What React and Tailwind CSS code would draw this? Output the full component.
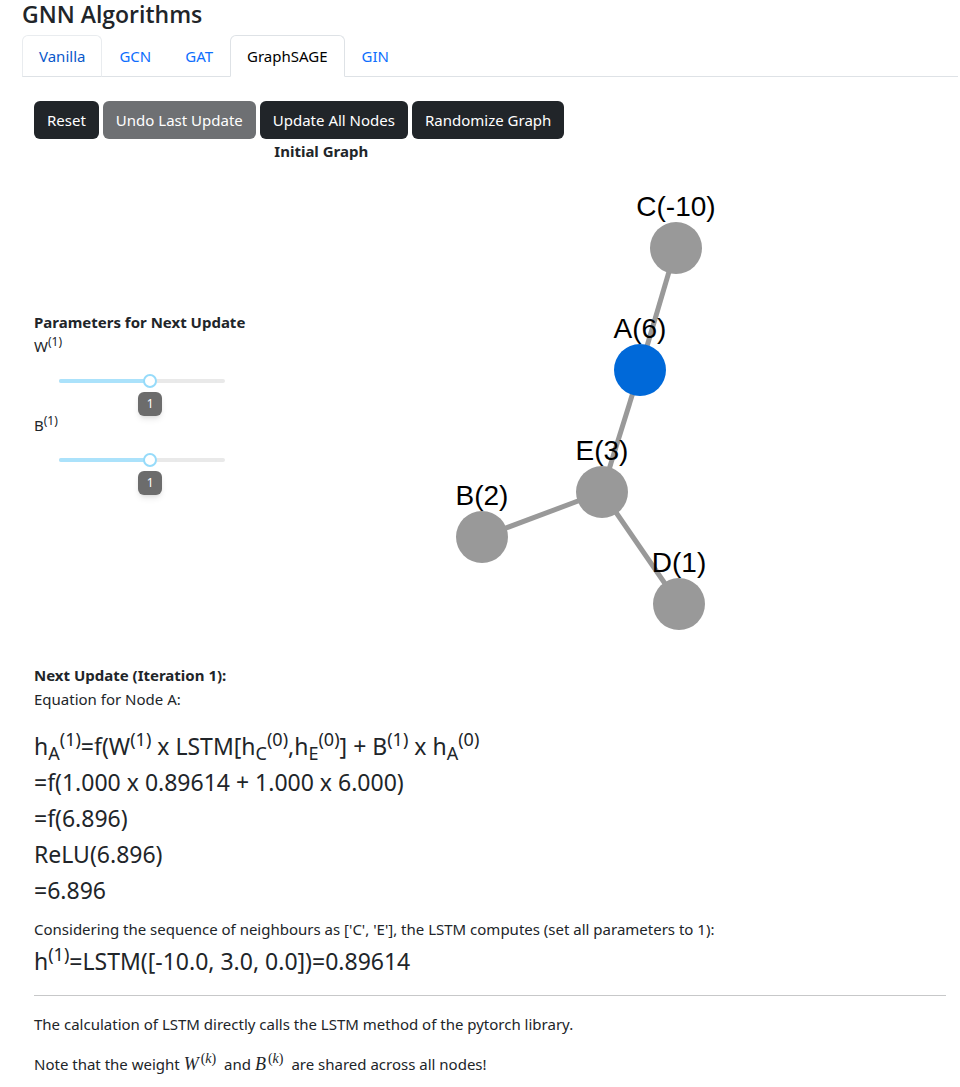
import { useState } from "react";
import clsx from "clsx";

const TABS = ["Vanilla", "GCN", "GAT", "GraphSAGE", "GIN"];

const NODES = [
  { id: "A", value: 6, x: 390, y: 207, active: true },
  { id: "B", value: 2, x: 232, y: 374 },
  { id: "C", value: -10, x: 426, y: 85 },
  { id: "D", value: 1, x: 429, y: 441 },
  { id: "E", value: 3, x: 352, y: 329 },
];

const EDGES = [
  ["C", "A"],
  ["A", "E"],
  ["B", "E"],
  ["E", "D"],
];

const nodeById = (id) => NODES.find((n) => n.id === id);

function Tab({ name, selected, highlighted, onClick }) {
  return (
    <button
      type="button"
      role="tab"
      aria-selected={selected}
      onClick={onClick}
      className={clsx(
        "-mb-px h-[42px] cursor-pointer rounded-t-md border px-4",
        selected && "border-[#dee2e6] border-b-white bg-white text-black",
        !selected && highlighted && "border-[#e9ecef] border-b-[#dee2e6] text-[#0a58ca]",
        !selected && !highlighted && "border-transparent text-[#0d6efd]"
      )}
    >
      {name}
    </button>
  );
}

function ActionButton({ children, disabled }) {
  return (
    <button
      type="button"
      disabled={disabled}
      className="h-[38px] rounded-md bg-[#212529] px-[13px] text-white disabled:opacity-65"
    >
      {children}
    </button>
  );
}

function ParameterSlider({ id, symbol }) {
  const [value, setValue] = useState(1);
  const percent = ((value + 10) / 20) * 100;
  return (
    <div className="h-[79px]">
      <label htmlFor={id} className="block h-6">
        {symbol}
        <sup className="text-xs leading-none">(1)</sup>
      </label>
      <div className="relative mx-[25px] mt-4 h-[14px]">
        <div className="absolute inset-x-0 top-[5px] h-1 rounded-sm bg-[#e9e9e9]">
          <div className="h-1 rounded-sm bg-[#abe2fb]" style={{ width: `${percent}%` }} />
        </div>
        <input
          id={id}
          type="range"
          min="-10"
          max="10"
          value={value}
          onChange={(e) => setValue(Number(e.target.value))}
          className="absolute inset-y-0 -left-[7px] m-0 h-[14px] w-[calc(100%+14px)] appearance-none bg-transparent [&::-webkit-slider-thumb]:h-[14px] [&::-webkit-slider-thumb]:w-[14px] [&::-webkit-slider-thumb]:appearance-none [&::-webkit-slider-thumb]:rounded-full [&::-webkit-slider-thumb]:border-2 [&::-webkit-slider-thumb]:border-solid [&::-webkit-slider-thumb]:border-[#96dbfa] [&::-webkit-slider-thumb]:bg-white"
        />
        <output
          htmlFor={id}
          className="absolute top-[18px] flex h-6 min-w-6 -translate-x-1/2 items-center justify-center rounded-md bg-[#6c6c6c] px-1 text-xs text-white shadow-md shadow-black/10"
          style={{ left: `${percent}%` }}
        >
          {value}
        </output>
      </div>
    </div>
  );
}

function Graph() {
  return (
    <svg viewBox="0 0 696 500" className="h-[500px] min-w-0 flex-1" role="img" aria-label="Initial Graph">
      {EDGES.map(([from, to]) => (
        <line
          key={from + to}
          x1={nodeById(from).x}
          y1={nodeById(from).y}
          x2={nodeById(to).x}
          y2={nodeById(to).y}
          stroke="#999999"
          strokeWidth="5"
        />
      ))}
      {NODES.map((n) => (
        <g key={n.id}>
          <circle cx={n.x} cy={n.y} r="26" fill={n.active ? "#0069d9" : "#999999"} />
          <text
            x={n.x}
            y={n.y - 32}
            textAnchor="middle"
            fill="#000000"
            className="font-['Liberation_Sans',Arial,sans-serif] text-[28px]"
          >
            {`${n.id}(${n.value})`}
          </text>
        </g>
      ))}
    </svg>
  );
}

function Sup({ children }) {
  return <sup className="text-lg leading-none">{children}</sup>;
}

function Sub({ children }) {
  return <sub className="text-lg leading-none">{children}</sub>;
}

function MathSymbol({ children }) {
  return (
    <span className="mr-1 font-['Liberation_Serif',serif] text-lg leading-none">
      <i>{children}</i>
      <sup className="ml-0.5 text-sm leading-none">
        (<i>k</i>)
      </sup>
    </span>
  );
}

export default function App() {
  const [tab, setTab] = useState("GraphSAGE");
  return (
    <main className="bg-white pr-0.5 pl-[22px] font-['Noto_Sans','Segoe_UI',sans-serif] text-[15px] leading-6 text-[#212529]">
      <h1 className="pb-[7px] font-['Open_Sans','Segoe_UI',sans-serif] text-[23px] leading-7 font-semibold">
        GNN Algorithms
      </h1>
      <div role="tablist" className="flex border-b border-[#dee2e6]">
        {TABS.map((name) => (
          <Tab
            key={name}
            name={name}
            selected={tab === name}
            highlighted={name === "Vanilla"}
            onClick={() => setTab(name)}
          />
        ))}
      </div>

      <div className="px-3 pt-6">
        <div className="flex flex-wrap gap-1">
          <ActionButton>Reset</ActionButton>
          <ActionButton disabled>Undo Last Update</ActionButton>
          <ActionButton>Update All Nodes</ActionButton>
          <ActionButton>Randomize Graph</ActionButton>
        </div>
        <h2 className="w-[63%] text-center font-bold">Initial Graph</h2>

        <div className="flex items-center">
          <div className="w-[216px] shrink-0 pb-6">
            <h3 className="font-bold whitespace-nowrap">Parameters for Next Update</h3>
            <ParameterSlider id="weight-w" symbol="W" />
            <ParameterSlider id="weight-b" symbol="B" />
          </div>
          <Graph />
        </div>

        <h3 className="font-bold">Next Update (Iteration 1):</h3>
        <p>Equation for Node A:</p>
        <div className="pt-[17px] text-[23px] leading-9">
          <p>
            h<Sub>A</Sub>
            <Sup>(1)</Sup>=f(W<Sup>(1)</Sup> x LSTM[h<Sub>C</Sub>
            <Sup>(0)</Sup>,h<Sub>E</Sub>
            <Sup>(0)</Sup>] + B<Sup>(1)</Sup> x h<Sub>A</Sub>
            <Sup>(0)</Sup>
          </p>
          <p>=f(1.000 x 0.89614 + 1.000 x 6.000)</p>
          <p>=f(6.896)</p>
          <p>ReLU(6.896)</p>
          <p>=6.896</p>
        </div>
        <p className="pt-[9px]">
          Considering the sequence of neighbours as ['C', 'E'], the LSTM computes (set all parameters to 1):
        </p>
        <p className="pt-0.5 text-[23px] leading-9">
          h<Sup>(1)</Sup>=LSTM([-10.0, 3.0, 0.0])=0.89614
        </p>
        <hr className="my-4 border-[#c7c8c9]" />
        <p>The calculation of LSTM directly calls the LSTM method of the pytorch library.</p>
        <p className="py-4">
          Note that the weight <MathSymbol>W</MathSymbol> and <MathSymbol>B</MathSymbol> are shared across all nodes!
        </p>
      </div>
    </main>
  );
}
